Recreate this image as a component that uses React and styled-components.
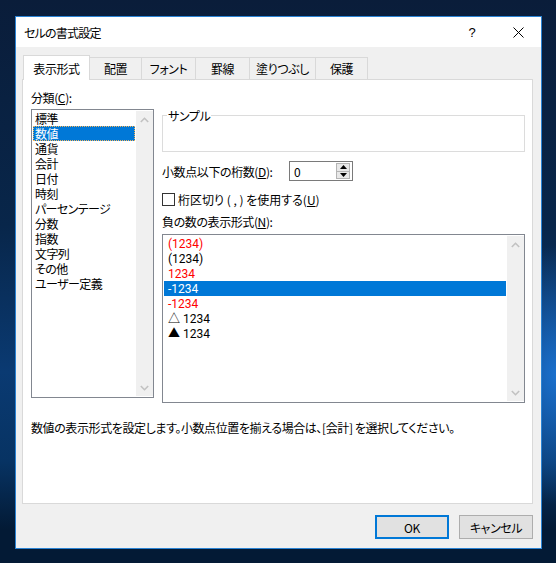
import React from "react"
import styled, { createGlobalStyle } from "styled-components"

const GlobalStyle = createGlobalStyle`
  html, body {
    margin: 0;
    padding: 0;
  }
  body {
    font-family: "Noto Sans CJK JP", "Noto Sans", sans-serif;
    font-size: 12px;
    color: #000;
    font-feature-settings: "palt";
    letter-spacing: -0.4px;
  }
  * {
    box-sizing: border-box;
  }
`

const categories = [
  "標準",
  "数値",
  "通貨",
  "会計",
  "日付",
  "時刻",
  "パーセンテージ",
  "分数",
  "指数",
  "文字列",
  "その他",
  "ユーザー定義",
]

const negatives = [
  { text: "(1234)", red: true },
  { text: "(1234)" },
  { text: "1234", red: true },
  { text: "-1234", selected: true },
  { text: "-1234", red: true },
  { text: "△ 1234" },
  { text: "▲ 1234" },
]

const tabs = [
  { label: "表示形式", w: 67, active: true },
  { label: "配置", w: 53 },
  { label: "フォント", w: 55 },
  { label: "罫線", w: 55 },
  { label: "塗りつぶし", w: 67 },
  { label: "保護", w: 53 },
]

const Desktop = styled.div`
  width: 556px;
  height: 563px;
  padding: 16px 0 0 15px;
  overflow: hidden;
  background:
    radial-gradient(70px 130px at 100% 375px, rgba(28, 118, 215, 0.9), rgba(28, 118, 215, 0) 100%),
    linear-gradient(180deg, #0a1d3a 0%, #08264a 40%, #0a3a72 66%, #073363 82%, #031a35 94%);
`

const Window = styled.div`
  width: 527px;
  height: 533px;
  border: 1px solid #2a83d4;
  background: #f0f0f0;
  display: flex;
  flex-direction: column;
`

const TitleBar = styled.div`
  height: 30px;
  flex-shrink: 0;
  background: #fff;
  display: flex;
  align-items: center;
  padding-left: 8px;
`

const Title = styled.div`
  flex: 1;
  line-height: 15px;
  letter-spacing: -0.8px;
`

const CaptionButton = styled.div`
  width: 46px;
  height: 30px;
  display: flex;
  align-items: center;
  justify-content: center;
  font-family: "Liberation Sans", sans-serif;
  font-size: 13px;
`

const Body = styled.div`
  flex: 1;
  display: flex;
  flex-direction: column;
  padding: 8px 8px 9px 6px;
`

const TabStrip = styled.div`
  display: flex;
  align-items: flex-start;
  height: 25px;
  margin-bottom: -1px;
  padding-left: 1px;
  position: relative;
  z-index: 1;
`

const Tab = styled.div`
  width: ${(p) => p.$w}px;
  height: ${(p) => (p.$active ? 25 : 22)}px;
  margin-top: ${(p) => (p.$active ? 0 : 2)}px;
  margin-left: ${(p) => (p.$first ? 0 : -1)}px;
  border: 1px solid #d9d9d9;
  border-bottom: none;
  background: ${(p) => (p.$active ? "#fff" : "#f0f0f0")};
  display: flex;
  align-items: center;
  justify-content: center;
  line-height: 15px;
  position: relative;
  z-index: ${(p) => (p.$active ? 2 : 1)};
`

const Panel = styled.div`
  flex: 1;
  background: #fff;
  border: 1px solid #d9d9d9;
  padding: 10px 7px 0 8px;
`

const Columns = styled.div`
  display: grid;
  grid-template-columns: 123px 363px;
  column-gap: 8px;
  align-items: start;
`

const Column = styled.div`
  display: flex;
  flex-direction: column;
  padding-top: ${(p) => p.$pt || 0}px;
`

const Label = styled.div`
  line-height: 15px;
  white-space: nowrap;
  margin-top: ${(p) => p.$mt || 0}px;
  margin-bottom: ${(p) => p.$mb || 0}px;
  letter-spacing: ${(p) => (p.$wide ? "0" : "inherit")};
`

const Key = styled.span`
  text-decoration: underline;
  text-underline-offset: 1px;
`

const ListBox = styled.div`
  height: ${(p) => p.$h}px;
  border: 1px solid #828790;
  background: #fff;
  display: flex;
  font-family: ${(p) => (p.$latin ? '"Roboto", "Noto Sans CJK JP", sans-serif' : "inherit")};
  letter-spacing: ${(p) => (p.$latin ? "0" : "-0.6px")};
`

const ListItems = styled.div`
  flex: 1;
  min-width: 0;
  padding: 1px;
`

const ListItem = styled.div`
  height: 15px;
  line-height: ${(p) => (p.$latin ? 17 : 15)}px;
  padding-left: ${(p) => p.$pl}px;
  white-space: nowrap;
  color: ${(p) => (p.$selected ? "#fff" : p.$red ? "#ff0000" : "#000")};
  background: ${(p) => (p.$selected ? "#0078d7" : "transparent")};
  outline: ${(p) => (p.$focus ? "1px dotted #f4b45c" : "none")};
  outline-offset: -1px;
`

const ScrollBar = styled.div`
  width: 17px;
  margin: 1px 0;
  background: #f0f0f0;
  display: flex;
  flex-direction: column;
  justify-content: space-between;
`

const ScrollArrow = styled.div`
  height: 17px;
  display: flex;
  align-items: center;
  justify-content: center;
`

const GroupBox = styled.fieldset`
  margin: 0;
  padding: 0 0 0 4px;
  border: 1px solid #dcdcdc;
  min-width: 0;
`

const GroupLegend = styled.legend`
  padding: 0 1px;
  line-height: 15px;
`

const GroupBody = styled.div`
  height: 28px;
`

const FieldRow = styled.div`
  display: flex;
  align-items: center;
  margin-top: ${(p) => p.$mt}px;
`

const FieldLabel = styled.div`
  width: 127px;
  line-height: 15px;
  white-space: nowrap;
`

const SpinBox = styled.div`
  width: 64px;
  height: 20px;
  border: 1px solid #7a7a7a;
  background: #fff;
  display: flex;
  align-items: center;
  padding: 0 2px 0 4px;
`

const SpinValue = styled.span`
  flex: 1;
  line-height: 15px;
`

const SpinButtons = styled.div`
  width: 14px;
  height: 16px;
  display: flex;
  flex-direction: column;
`

const SpinButton = styled.div`
  flex: 1;
  border: 1px solid #b4b4b4;
  margin-top: ${(p) => (p.$down ? -1 : 0)}px;
  background: #e8e8e8;
  display: flex;
  align-items: center;
  justify-content: center;
`

const CheckBox = styled.div`
  width: 13px;
  height: 13px;
  border: 1px solid #333;
  background: #fff;
  margin-right: 3px;
`

const Description = styled.div`
  margin-top: 17px;
  line-height: 15px;
  white-space: nowrap;
`

const ButtonRow = styled.div`
  display: flex;
  justify-content: flex-end;
  gap: 10px;
  margin-top: 11px;
`

const DialogButton = styled.button`
  width: 74px;
  height: 24px;
  padding: 0;
  font: inherit;
  letter-spacing: inherit;
  color: #000;
  background: #e1e1e1;
  border: ${(p) => (p.$default ? "2px solid #0078d7" : "1px solid #adadad")};
`

const Chevron = ({ down }) => (
  <svg width="9" height="6" viewBox="0 0 9 6">
    <polyline
      points={down ? "0.8,1 4.5,4.7 8.2,1" : "0.8,5 4.5,1.3 8.2,5"}
      fill="none"
      stroke="#c2c2c2"
      strokeWidth="1.6"
    />
  </svg>
)

const Triangle = ({ down }) => (
  <svg width="7" height="4" viewBox="0 0 7 4">
    <polygon points={down ? "0,0 7,0 3.5,4" : "0,4 7,4 3.5,0"} fill="#000" />
  </svg>
)

const ScrollTrack = () => (
  <ScrollBar>
    <ScrollArrow>
      <Chevron />
    </ScrollArrow>
    <ScrollArrow>
      <Chevron down />
    </ScrollArrow>
  </ScrollBar>
)

const App = () => {
  return (
    <Desktop>
      <GlobalStyle />
      <Window>
        <TitleBar>
          <Title>セルの書式設定</Title>
          <CaptionButton>?</CaptionButton>
          <CaptionButton>
            <svg width="11" height="11" viewBox="0 0 11 11">
              <path d="M0.5 0.5 L10.5 10.5 M10.5 0.5 L0.5 10.5" stroke="#000" strokeWidth="1" />
            </svg>
          </CaptionButton>
        </TitleBar>

        <Body>
          <TabStrip>
            {tabs.map((t, i) => (
              <Tab key={t.label} $w={t.w} $active={t.active} $first={i === 0}>
                {t.label}
              </Tab>
            ))}
          </TabStrip>

          <Panel>
            <Columns>
              <Column>
                <Label $mb={4}>
                  分類(<Key>C</Key>):
                </Label>
                <ListBox $h={289}>
                  <ListItems>
                    {categories.map((c, i) => (
                      <ListItem key={c} $pl={2} $selected={i === 1} $focus={i === 1}>
                        {c}
                      </ListItem>
                    ))}
                  </ListItems>
                  <ScrollTrack />
                </ListBox>
              </Column>

              <Column $pt={18}>
                <GroupBox>
                  <GroupLegend>サンプル</GroupLegend>
                  <GroupBody />
                </GroupBox>

                <FieldRow $mt={9}>
                  <FieldLabel>
                    小数点以下の桁数(<Key>D</Key>):
                  </FieldLabel>
                  <SpinBox>
                    <SpinValue>0</SpinValue>
                    <SpinButtons>
                      <SpinButton>
                        <Triangle />
                      </SpinButton>
                      <SpinButton $down>
                        <Triangle down />
                      </SpinButton>
                    </SpinButtons>
                  </SpinBox>
                </FieldRow>

                <FieldRow $mt={11}>
                  <CheckBox />
                  <Label $wide>
                    桁区切り ( , ) を使用する(<Key>U</Key>)
                  </Label>
                </FieldRow>

                <Label $mt={7} $mb={5}>
                  負の数の表示形式(<Key>N</Key>):
                </Label>
                <ListBox $h={169} $latin>
                  <ListItems>
                    {negatives.map((n, i) => (
                      <ListItem key={i} $pl={4} $latin $red={n.red} $selected={n.selected}>
                        {n.text}
                      </ListItem>
                    ))}
                  </ListItems>
                  <ScrollTrack />
                </ListBox>
              </Column>
            </Columns>

            <Description>
              数値の表示形式を設定します。小数点位置を揃える場合は、[会計] を選択してください。
            </Description>
          </Panel>

          <ButtonRow>
            <DialogButton $default>OK</DialogButton>
            <DialogButton>キャンセル</DialogButton>
          </ButtonRow>
        </Body>
      </Window>
    </Desktop>
  )
}

export default App
